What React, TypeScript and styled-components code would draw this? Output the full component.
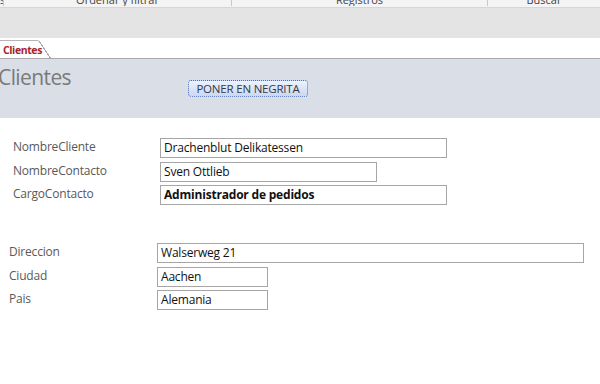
import styled, { createGlobalStyle } from 'styled-components';

const GlobalStyle = createGlobalStyle`
  html, body {
    margin: 0;
    padding: 0;
    background: #ffffff;
    font-family: 'Open Sans', 'Liberation Sans', sans-serif;
  }
  #root {
    width: 600px;
    height: 384px;
    overflow: hidden;
  }
`;

const ribbonGroups = [
  { label: 's', width: 4 },
  { label: 'Ordenar y filtrar', width: 228 },
  { label: 'Registros', width: 256 },
  { label: 'Buscar', width: 112 },
];

const topFields = [
  { label: 'NombreCliente', value: 'Drachenblut Delikatessen', width: 287 },
  { label: 'NombreContacto', value: 'Sven Ottlieb', width: 217 },
  { label: 'CargoContacto', value: 'Administrador de pedidos', width: 287, bold: true },
];

const addressFields = [
  { label: 'Direccion', value: 'Walserweg 21', width: 427 },
  { label: 'Ciudad', value: 'Aachen', width: 111 },
  { label: 'Pais', value: 'Alemania', width: 111 },
];

const App = () => (
  <Page>
    <GlobalStyle />
    <Ribbon>
      <GroupLabels>
        {ribbonGroups.map(({ label, width }) => (
          <GroupLabel key={label} $width={width}>
            <span>{label}</span>
          </GroupLabel>
        ))}
      </GroupLabels>
      <RibbonBody />
    </Ribbon>
    <TabStrip>
      <Tab>Clientes</Tab>
    </TabStrip>
    <FormHeader>
      <Title>Clientes</Title>
      <BoldButton type="button">PONER EN NEGRITA</BoldButton>
    </FormHeader>
    <FormBody>
      <FieldGroup $labelLeft={13} $inputLeft={160} $top={20}>
        {topFields.map(({ label, value, width, bold }) => (
          <FieldRow key={label}>
            <Label>{label}</Label>
            <TextBox $width={width} $bold={bold}>
              {value}
            </TextBox>
          </FieldRow>
        ))}
      </FieldGroup>
      <FieldGroup $labelLeft={9} $inputLeft={157} $top={38}>
        {addressFields.map(({ label, value, width }) => (
          <FieldRow key={label}>
            <Label>{label}</Label>
            <TextBox $width={width}>{value}</TextBox>
          </FieldRow>
        ))}
      </FieldGroup>
    </FormBody>
  </Page>
);

export default App;

const Page = styled('div')`
  width: 600px;
  height: 384px;
  display: flex;
  flex-direction: column;
  background: #ffffff;
`;

const Ribbon = styled('div')`
  display: flex;
  flex-direction: column;
`;

const GroupLabels = styled('div')`
  display: flex;
  height: 7px;
  background: #f4f4f4;
  border-bottom: 1px solid #d6d6d6;
  overflow: hidden;
`;

const GroupLabel = styled('div')<{ $width: number }>`
  width: ${({ $width }) => $width}px;
  flex-shrink: 0;
  box-sizing: border-box;
  border-right: 1px solid #c8c8c8;
  text-align: center;
  font-size: 11px;
  color: #444444;
  line-height: 11px;
  height: 6px;
  overflow: hidden;

  span {
    display: block;
    margin-top: -6px;
    white-space: nowrap;
  }

  &:last-child {
    border-right: none;
  }
`;

const RibbonBody = styled('div')`
  height: 30px;
  background: #e4e4e4;
`;

const TabStrip = styled('div')`
  height: 20px;
  background: #ffffff;
  border-bottom: 1px solid #a9a9a9;
  display: flex;
  align-items: flex-end;
`;

const Tab = styled('div')`
  position: relative;
  height: 18px;
  width: 40px;
  box-sizing: border-box;
  padding: 2px 0 0 3px;
  border-top: 1px solid #b5b5b5;
  border-top-right-radius: 3px;
  background: #ffffff;
  font-size: 10.5px;
  font-weight: 700;
  color: #a4262c;
  letter-spacing: -0.4px;

  &::after {
    content: '';
    position: absolute;
    top: 0;
    right: -11px;
    width: 12px;
    height: 18px;
    background: linear-gradient(
      to top right,
      transparent calc(50% - 0.7px),
      #a9a9a9 calc(50% - 0.5px),
      #a9a9a9 calc(50% + 0.5px),
      #ffffff calc(50% + 0.7px)
    );
  }
`;

const FormHeader = styled('div')`
  height: 59px;
  background: #d9dee7;
  display: flex;
  align-items: flex-start;
`;

const Title = styled('h1')`
  margin: 3px 0 0 -2px;
  width: 190px;
  font-size: 21px;
  font-weight: 400;
  line-height: 30px;
  color: #7a7a7a;
  letter-spacing: -0.6px;
`;

const BoldButton = styled('button')`
  margin-top: 21px;
  width: 120px;
  height: 17px;
  padding: 0;
  border: 1px dotted #4a6fb5;
  border-radius: 3px;
  background: linear-gradient(to bottom, #eef3fc, #c9d8f3);
  font-family: 'Open Sans', 'Liberation Sans', sans-serif;
  font-size: 11.5px;
  color: #333a44;
  line-height: 15px;
  letter-spacing: -0.2px;
`;

const FormBody = styled('div')`
  flex: 1;
  display: flex;
  flex-direction: column;
`;

const FieldGroup = styled('div')<{ $labelLeft: number; $inputLeft: number; $top: number }>`
  display: grid;
  grid-template-columns: ${({ $labelLeft, $inputLeft }) => `${$inputLeft - $labelLeft}px auto`};
  row-gap: 3.5px;
  padding-left: ${({ $labelLeft }) => $labelLeft}px;
  margin-top: ${({ $top }) => $top}px;
`;

const FieldRow = styled('div')`
  display: contents;
`;

const Label = styled('div')`
  font-size: 12px;
  line-height: 17px;
  color: #595959;
  letter-spacing: -0.2px;
`;

const TextBox = styled('div')<{ $width: number; $bold?: boolean }>`
  width: ${({ $width }) => $width}px;
  height: 20px;
  box-sizing: border-box;
  border: 1px solid #a6a6a6;
  padding: 0 0 0 3px;
  font-size: 12px;
  line-height: 18px;
  font-weight: ${({ $bold }) => ($bold ? 700 : 400)};
  color: #111111;
  letter-spacing: -0.2px;
  white-space: nowrap;
  overflow: hidden;
`;
